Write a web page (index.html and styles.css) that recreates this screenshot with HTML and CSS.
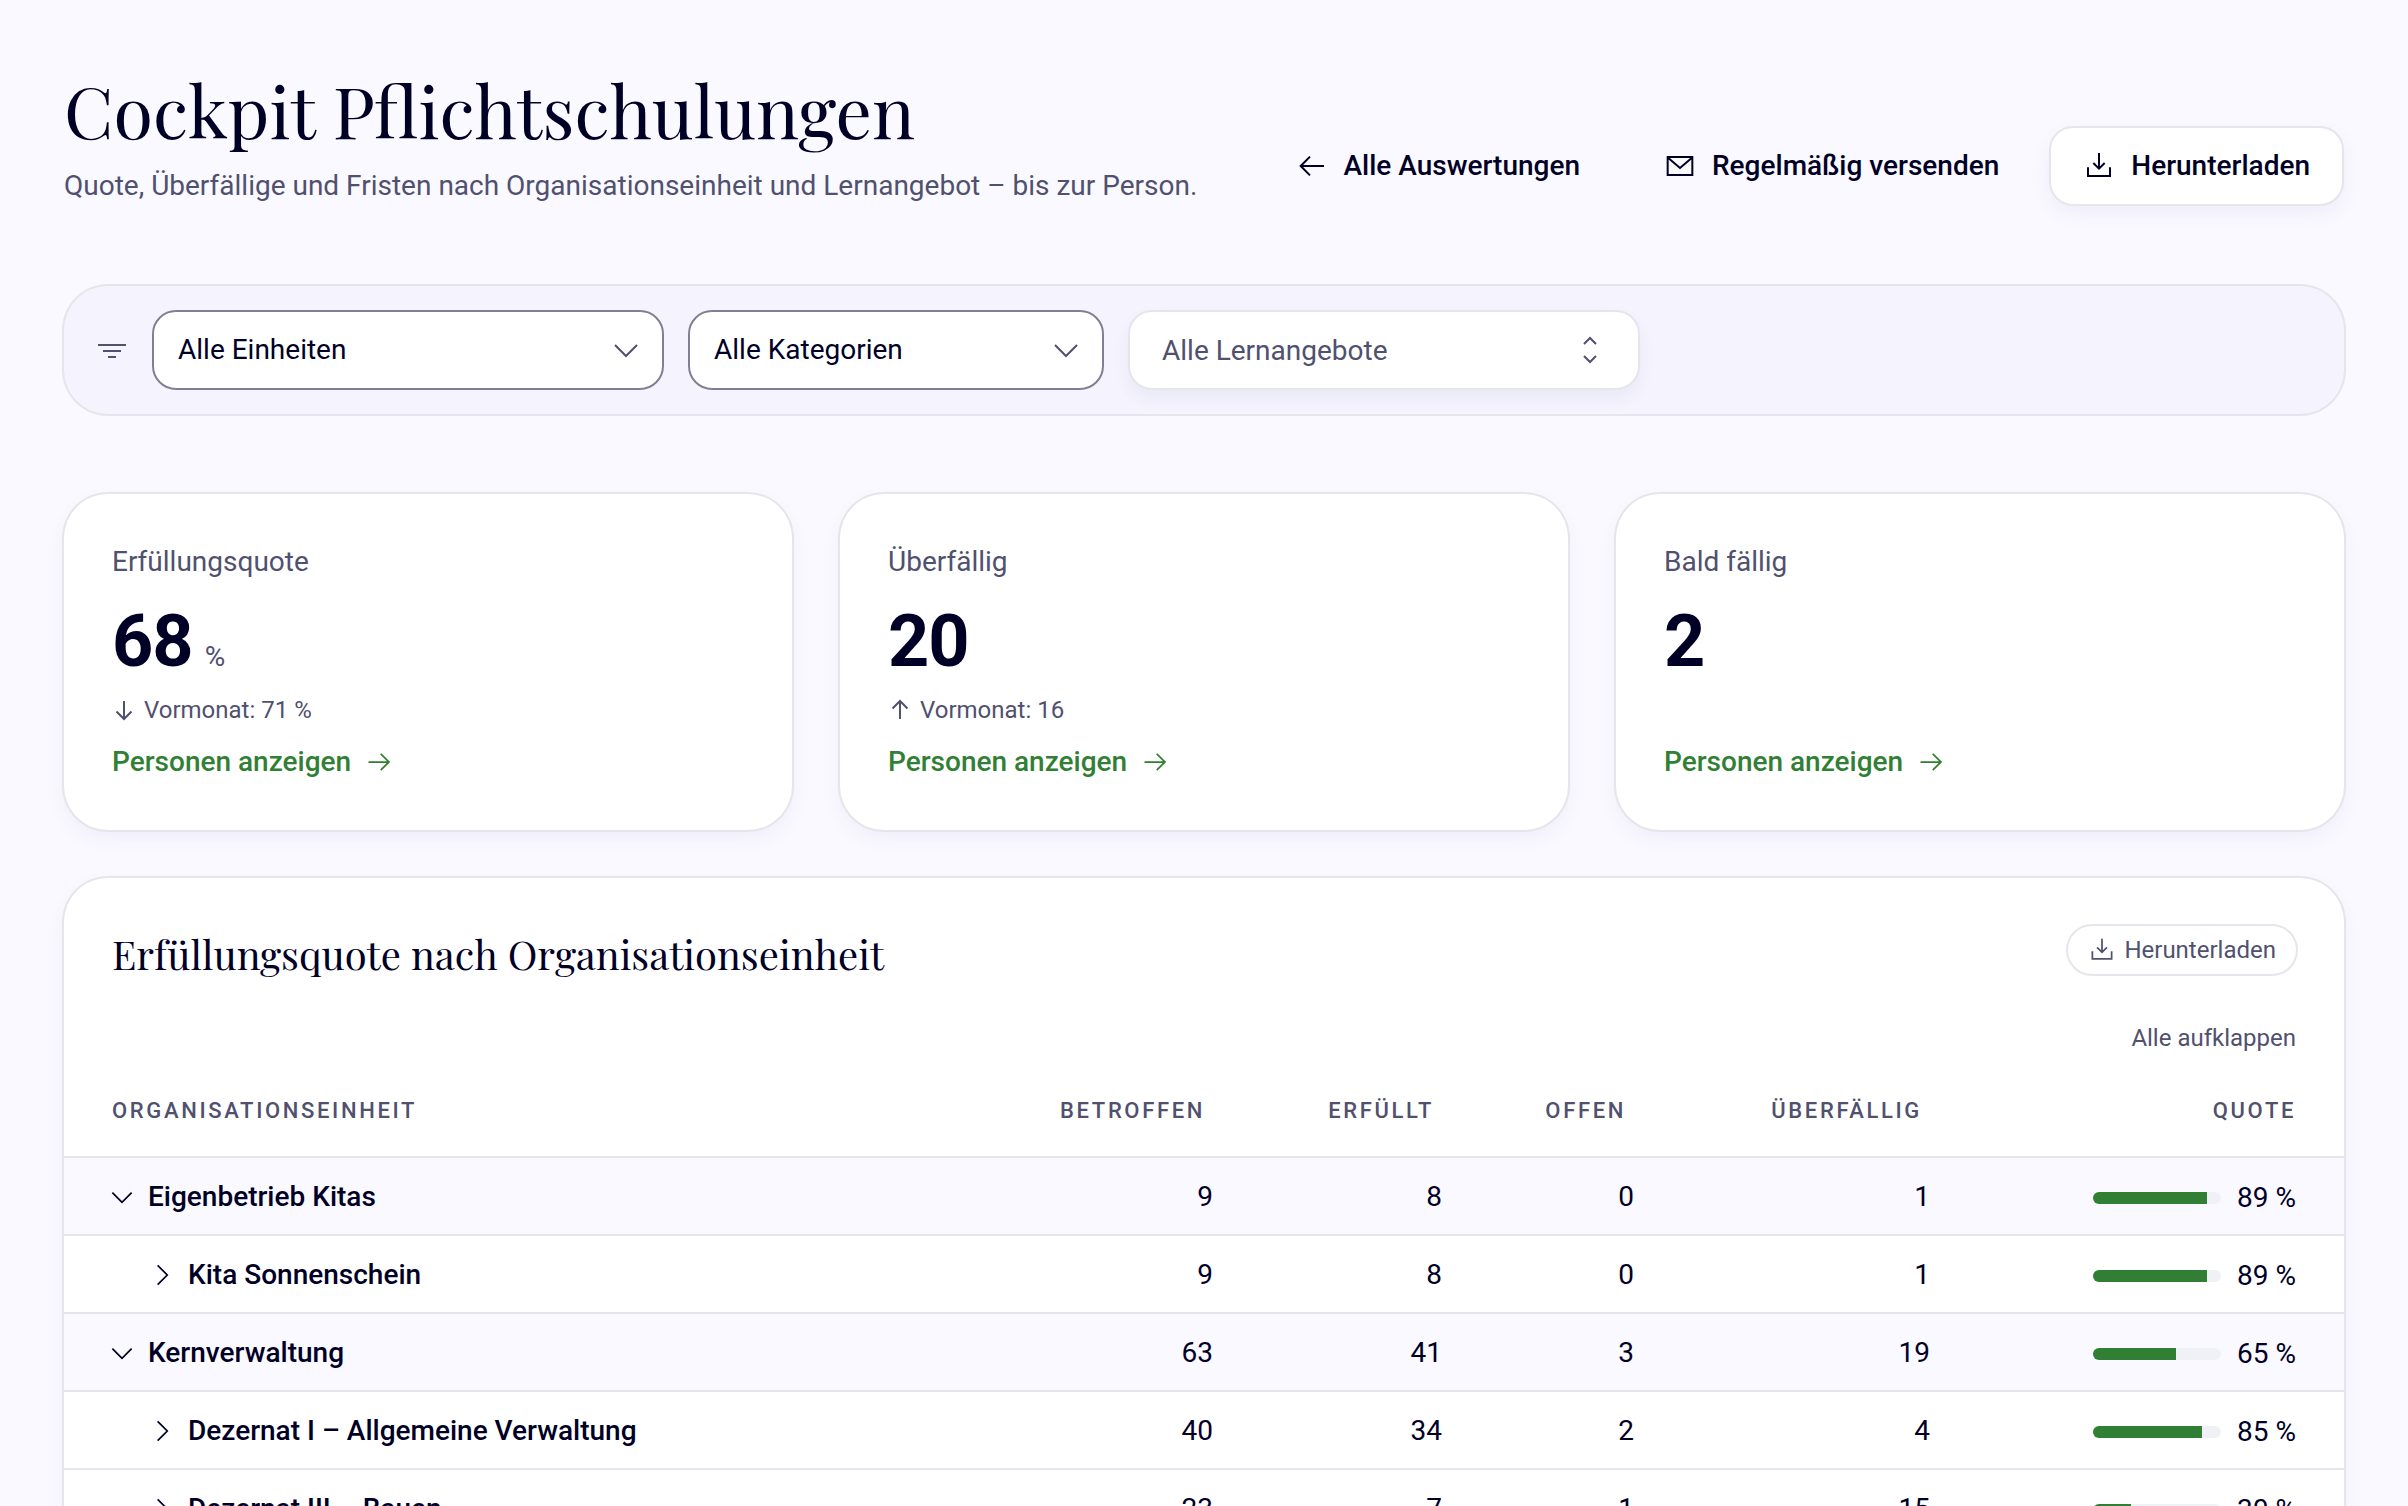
FILE: index.html
```html
<!DOCTYPE html>
<html lang="de">
<head>
<meta charset="utf-8">
<meta name="viewport" content="width=device-width, initial-scale=1">
<title>Cockpit Pflichtschulungen</title>
<link rel="stylesheet" href="styles.css">
</head>
<body>
<svg class="sprite" aria-hidden="true">
  <symbol id="i-left" viewBox="0 0 24 24"><path d="m10.500 5-7 7 7 7M3.500 12H21"/></symbol>
  <symbol id="i-right" viewBox="0 0 24 24"><path d="m13.500 5 7 7-7 7M20.500 12H3"/></symbol>
  <symbol id="i-mail" viewBox="0 0 24 24"><path d="M2.750 5.250h18.500v13.500H2.750zM3.250 6 12 13.500 20.750 6"/></symbol>
  <symbol id="i-download" viewBox="0 0 24 24"><path d="M3.750 13v6.500h16.500V13M12 2.250V14M7.750 9.750 12 14l4.250-4.250"/></symbol>
  <symbol id="i-filter" viewBox="0 0 24 24"><path d="M1.500 8.250h21M5.250 12.750h13.500M9 17.250h6"/></symbol>
  <symbol id="i-down" viewBox="0 0 24 24"><path d="m3.750 8.250 8.250 8.250 8.250-8.250"/></symbol>
  <symbol id="i-next" viewBox="0 0 24 24"><path d="m8.250 3.750 8.250 8.250-8.250 8.250"/></symbol>
  <symbol id="i-updown" viewBox="0 0 24 24"><path d="M7.500 7.500 12 3l4.500 4.500M7.500 16.500 12 21l4.500-4.500"/></symbol>
  <symbol id="i-fall" viewBox="0 0 24 24"><path d="M12 3v18M4.500 13.500 12 21l7.500-7.500"/></symbol>
  <symbol id="i-rise" viewBox="0 0 24 24"><path d="M12 21V3M4.500 10.500 12 3l7.500 7.500"/></symbol>
</svg>
<main class="page">
  <header class="page-head">
    <div class="heading">
      <h1>Cockpit Pflichtschulungen</h1>
      <p>Quote, Überfällige und Fristen nach Organisationseinheit und Lernangebot – bis zur Person.</p>
    </div>
    <div class="actions">
      <a class="btn" href="#"><svg class="icon"><use href="#i-left"/></svg>Alle Auswertungen</a>
      <button class="btn" type="button"><svg class="icon"><use href="#i-mail"/></svg>Regelmäßig versenden</button>
      <button class="btn btn-outline" type="button"><svg class="icon"><use href="#i-download"/></svg>Herunterladen</button>
    </div>
  </header>

  <form class="filters" aria-label="Filter">
    <svg class="icon filter-icon"><use href="#i-filter"/></svg>
    <div class="field field-wide">
      <select aria-label="Einheit"><option>Alle Einheiten</option></select>
      <svg class="icon"><use href="#i-down"/></svg>
    </div>
    <div class="field">
      <select aria-label="Kategorie"><option>Alle Kategorien</option></select>
      <svg class="icon"><use href="#i-down"/></svg>
    </div>
    <div class="field field-wide field-search">
      <input type="text" aria-label="Lernangebot" placeholder="Alle Lernangebote">
      <svg class="icon"><use href="#i-updown"/></svg>
    </div>
  </form>

  <section class="cards" aria-label="Kennzahlen">
    <article class="card">
      <h2 class="card-label">Erfüllungsquote</h2>
      <p class="card-value">68<span class="unit">%</span></p>
      <p class="card-trend"><svg class="icon"><use href="#i-fall"/></svg>Vormonat: 71 %</p>
      <a class="card-link" href="#">Personen anzeigen<svg class="icon"><use href="#i-right"/></svg></a>
    </article>
    <article class="card">
      <h2 class="card-label">Überfällig</h2>
      <p class="card-value">20</p>
      <p class="card-trend"><svg class="icon"><use href="#i-rise"/></svg>Vormonat: 16</p>
      <a class="card-link" href="#">Personen anzeigen<svg class="icon"><use href="#i-right"/></svg></a>
    </article>
    <article class="card">
      <h2 class="card-label">Bald fällig</h2>
      <p class="card-value">2</p>
      <a class="card-link" href="#">Personen anzeigen<svg class="icon"><use href="#i-right"/></svg></a>
    </article>
  </section>

  <section class="panel">
    <div class="panel-head">
      <h2>Erfüllungsquote nach Organisationseinheit</h2>
      <button class="pill" type="button"><svg class="icon"><use href="#i-download"/></svg>Herunterladen</button>
    </div>
    <div class="panel-tools"><button class="text-btn" type="button">Alle aufklappen</button></div>
    <table class="units">
      <colgroup><col><col class="c-affected"><col class="c-done"><col class="c-open"><col class="c-late"><col class="c-rate"></colgroup>
      <thead>
        <tr><th scope="col">Organisationseinheit</th><th scope="col">Betroffen</th><th scope="col">Erfüllt</th><th scope="col">Offen</th><th scope="col">Überfällig</th><th scope="col">Quote</th></tr>
      </thead>
      <tbody>
        <tr class="parent"><th scope="row"><button class="toggle" type="button"><svg class="icon"><use href="#i-down"/></svg>Eigenbetrieb Kitas</button></th><td>9</td><td>8</td><td>0</td><td>1</td><td><div class="rate"><span class="bar"><span class="fill" style="width:89%"></span></span>89 %</div></td></tr>
        <tr class="child"><th scope="row"><button class="toggle" type="button"><svg class="icon"><use href="#i-next"/></svg>Kita Sonnenschein</button></th><td>9</td><td>8</td><td>0</td><td>1</td><td><div class="rate"><span class="bar"><span class="fill" style="width:89%"></span></span>89 %</div></td></tr>
        <tr class="parent"><th scope="row"><button class="toggle" type="button"><svg class="icon"><use href="#i-down"/></svg>Kernverwaltung</button></th><td>63</td><td>41</td><td>3</td><td>19</td><td><div class="rate"><span class="bar"><span class="fill" style="width:65%"></span></span>65 %</div></td></tr>
        <tr class="child"><th scope="row"><button class="toggle" type="button"><svg class="icon"><use href="#i-next"/></svg>Dezernat I – Allgemeine Verwaltung</button></th><td>40</td><td>34</td><td>2</td><td>4</td><td><div class="rate"><span class="bar"><span class="fill" style="width:85%"></span></span>85 %</div></td></tr>
        <tr class="child"><th scope="row"><button class="toggle" type="button"><svg class="icon"><use href="#i-next"/></svg>Dezernat III – Bauen</button></th><td>23</td><td>7</td><td>1</td><td>15</td><td><div class="rate"><span class="bar"><span class="fill" style="width:30%"></span></span>30 %</div></td></tr>
      </tbody>
    </table>
  </section>
</main>
</body>
</html>
```
FILE: styles.css
```css
:root {
  --ink: #000026;
  --muted: #50506f;
  --line: #e5e5eb;
  --page: #faf9ff;
  --tint: #f4f3fe;
  --green: #317f34;
  --shadow: 0 8px 20px rgba(60, 50, 160, 0.06);
}

* { box-sizing: border-box; }

html { overflow: hidden; }

body {
  margin: 0;
  background: var(--page);
  color: var(--ink);
  font: 400 28px/40px Roboto, "Liberation Sans", sans-serif;
}

h1, h2, p { margin: 0; font-weight: 400; }

button, input, select { font: inherit; color: inherit; margin: 0; }

button { background: none; border: 0; padding: 0; cursor: pointer; }

a { color: inherit; text-decoration: none; }

.sprite { display: none; }

.icon {
  flex: none;
  width: 32px;
  height: 32px;
  fill: none;
  stroke: currentColor;
  stroke-width: 1.5;
}

.page {
  display: flex;
  flex-direction: column;
  padding: 64px;
}

.page-head {
  display: flex;
  justify-content: space-between;
  align-items: flex-end;
  gap: 32px;
  margin-bottom: 80px;
}

h1 {
  font: 400 72px/90px "Playfair Display", "Liberation Serif", serif;
  margin-bottom: 12px;
}

.heading p { color: var(--muted); }

.actions { display: flex; gap: 16px; }

.btn {
  display: flex;
  align-items: center;
  gap: 16px;
  height: 80px;
  padding: 0 32px;
  border: 2px solid transparent;
  border-radius: 24px;
  font-weight: 500;
  white-space: nowrap;
}

.btn-outline {
  background: #fff;
  border-color: var(--line);
  box-shadow: var(--shadow);
}

.filters {
  display: flex;
  align-items: center;
  gap: 24px;
  margin-bottom: 80px;
  padding: 24px 32px;
  border-radius: 44px;
  background: var(--tint);
  box-shadow: 0 0 0 2px var(--line);
}

.filter-icon { color: var(--muted); }

.field {
  display: grid;
  grid-template-columns: 1fr 32px;
  align-items: center;
  flex: 0 1 416px;
  height: 80px;
  padding-right: 20px;
  border: 2px solid #808095;
  border-radius: 24px;
  background: #fff;
}

.field-wide { flex-basis: 512px; }

.field .icon {
  grid-area: 1 / 2;
  color: var(--muted);
  pointer-events: none;
}

.field select, .field input {
  grid-area: 1 / 1 / 2 / 3;
  width: 100%;
  height: 76px;
  padding: 0 0 0 24px;
  border: 0;
  outline: 0;
  background: transparent;
  appearance: none;
}

.field-search {
  border-color: var(--line);
  padding-right: 32px;
  box-shadow: 0 8px 16px rgba(60, 80, 100, 0.06);
}

.field-search input { padding-left: 32px; }

.field input::placeholder { color: var(--muted); opacity: 1; }

.cards {
  display: grid;
  grid-template-columns: repeat(3, 1fr);
  gap: 48px;
  margin-bottom: 48px;
}

.card, .panel {
  border-radius: 44px;
  background: #fff;
  box-shadow: 0 0 0 2px var(--line), var(--shadow);
}

.card {
  display: flex;
  flex-direction: column;
  align-items: flex-start;
  padding: 48px;
}

.card-label { font-size: 28px; color: var(--muted); }

.card-value {
  display: flex;
  align-items: baseline;
  gap: 12px;
  margin: 16px 0 8px;
  font-size: 72px;
  font-weight: 700;
  line-height: 88px;
  letter-spacing: -1px;
}

.unit {
  font-size: 28px;
  font-weight: 400;
  line-height: 40px;
  letter-spacing: 0;
  color: var(--muted);
}

.card-trend {
  display: flex;
  align-items: center;
  gap: 8px;
  margin-bottom: 16px;
  font-size: 24px;
  line-height: 32px;
  color: var(--muted);
}

.card-trend .icon { width: 24px; height: 24px; stroke-width: 2; }

.card-link {
  display: flex;
  align-items: center;
  gap: 14px;
  margin-top: auto;
  font-weight: 500;
  color: var(--green);
}

.card-link .icon { width: 28px; height: 28px; }

.panel { padding: 48px 0; overflow: hidden; }

.panel-head {
  display: flex;
  justify-content: space-between;
  align-items: flex-start;
  padding: 0 48px;
}

.panel-head h2 {
  font: 400 40px/56px "Playfair Display", "Liberation Serif", serif;
}

.pill {
  display: flex;
  align-items: center;
  gap: 8px;
  height: 48px;
  padding: 0 20px;
  border-radius: 24px;
  box-shadow: 0 0 0 2px var(--line);
  font-size: 24px;
  color: var(--muted);
}

.pill .icon { width: 28px; height: 28px; }

.panel-tools {
  display: flex;
  justify-content: flex-end;
  padding: 40px 48px 12px;
}

.text-btn { font-size: 24px; line-height: 32px; color: var(--muted); }

.units {
  width: 100%;
  table-layout: fixed;
  border-collapse: separate;
  border-spacing: 0;
}

.c-affected { width: 228px; }
.c-done { width: 229px; }
.c-open { width: 192px; }
.c-late { width: 296px; }
.c-rate { width: 390px; }

.units th, .units td {
  padding: 0 24px;
  text-align: right;
  white-space: nowrap;
}

.units thead th {
  height: 92px;
  padding-right: 32px;
  border-bottom: 2px solid var(--line);
  color: var(--muted);
  font-size: 22px;
  font-weight: 500;
  line-height: 32px;
  letter-spacing: 0.12em;
  text-transform: uppercase;
}

.units tbody th, .units tbody td {
  height: 78px;
  padding-top: 2px;
  border-bottom: 2px solid var(--line);
}

.units tr > :first-child { padding-left: 48px; text-align: left; }
.units tr > :last-child, .units thead tr > :last-child { padding-right: 48px; }

.parent { background: var(--page); }

.units tbody tr > :first-child { padding-left: 44px; }
.units .child > :first-child.child, .units tbody .child > :first-child { padding-left: 84px; }

.toggle {
  display: flex;
  align-items: center;
  gap: 12px;
  font-weight: 500;
}

.toggle .icon { width: 28px; height: 28px; }

.rate {
  display: flex;
  justify-content: flex-end;
  align-items: center;
  gap: 16px;
  padding-top: 2px;
}

.bar {
  width: 128px;
  height: 12px;
  border-radius: 6px;
  background: #f0f0f7;
  overflow: hidden;
}

.fill { display: block; height: 100%; background: var(--green); }
```
